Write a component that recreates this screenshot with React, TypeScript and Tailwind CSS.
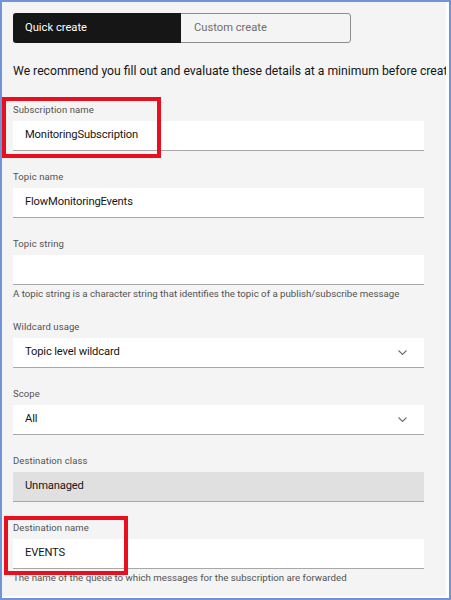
import React from 'react';

const FONT = { fontFamily: 'Roboto, "Noto Sans", Arial, sans-serif' };

function Chevron() {
  return (
    <svg width="9" height="5" viewBox="0 0 9 5" className="text-[#6f6f6f]">
      <path d="M0.5 0.5l4 4 4-4" fill="none" stroke="currentColor" strokeWidth="1.1" />
    </svg>
  );
}

type FieldProps = {
  label: string;
  value?: string;
  helper?: string;
  select?: boolean;
  disabled?: boolean;
};

function Field({ label, value, helper, select, disabled }: FieldProps) {
  return (
    <div className="mb-[19px] w-[411px]">
      <div className="mb-[4px] h-[14px] text-[9.5px] leading-[14px] tracking-[0.1px] text-[#525252]">{label}</div>
      <div
        className={`flex h-[30px] items-center justify-between border-b border-[#a8a8a8] pl-[12px] pr-[17px] text-[11.2px] tracking-[-0.15px] text-[#161616] ${
          disabled ? 'bg-[#e0e0e0]' : 'bg-white'
        }`}
      >
        <span>{value}</span>
        {select && <Chevron />}
      </div>
      {helper && (
        <div className="mt-[2px] h-[14px] whitespace-nowrap text-[9.7px] leading-[14px] text-[#525252]">
          {helper}
        </div>
      )}
    </div>
  );
}

export default function App() {
  return (
    <div className="relative h-[600px] w-[451px] overflow-hidden bg-white" style={FONT}>
      <div className="flex h-full w-full flex-col border-2 border-[#7094d8]">
        <div className="h-[594px] w-[444px] overflow-hidden bg-[#f4f4f4] pl-[11px] pt-[11px]">
          {/* Toggle */}
          <div className="flex h-[30px] w-[338px] overflow-hidden rounded-[3px] text-[11.2px]">
            <div className="flex w-[168px] items-center bg-[#161616] pl-[12px] text-white">Quick create</div>
            <div className="flex flex-1 items-center rounded-r-[3px] border border-l-0 border-[#8d8d8d] pl-[13px] text-[#6f6f6f]">
              Custom create
            </div>
          </div>

          <p className="mt-[18px] mb-[22px] whitespace-nowrap text-[12.2px] leading-[20px] text-[#161616]">
            We recommend you fill out and evaluate these details at a minimum before creating the subscription
          </p>

          <Field label="Subscription name" value="MonitoringSubscription" />
          <Field label="Topic name" value="FlowMonitoringEvents" />
          <Field
            label="Topic string"
            helper="A topic string is a character string that identifies the topic of a publish/subscribe message"
          />
          <Field label="Wildcard usage" value="Topic level wildcard" select />
          <Field label="Scope" value="All" select />
          <Field label="Destination class" value="Unmanaged" disabled />
          <Field
            label="Destination name"
            value="EVENTS"
            helper="The name of the queue to which messages for the subscription are forwarded"
          />
        </div>
      </div>

      {/* highlight boxes */}
      <div className="absolute left-[2px] top-[97px] h-[61px] w-[159px] border-4 border-[#e8101f]" />
      <div className="absolute left-[4px] top-[516px] h-[59px] w-[124px] border-4 border-[#e8101f]" />
    </div>
  );
}
